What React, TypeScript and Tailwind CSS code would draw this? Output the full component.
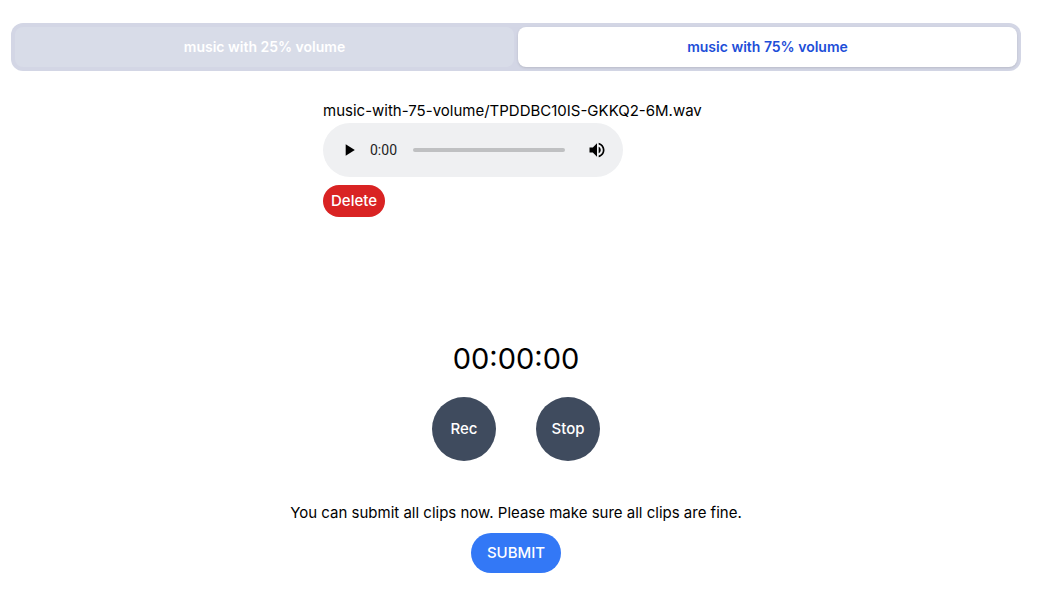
import { useState } from "react";

const tabs = ["music with 25% volume", "music with 75% volume"];

function AudioPlayer() {
  const [position, setPosition] = useState(0);
  return (
    <div className="flex h-[54px] w-[300px] items-center rounded-full bg-[#eff0f2] px-4">
      <button type="button" aria-label="Play" className="flex size-5 shrink-0 items-center justify-center">
        <svg viewBox="0 0 24 24" className="size-5" fill="#000">
          <path d="M8 5v14l11-7z" />
        </svg>
      </button>
      <span className="ml-[11px] w-[43px] font-[Roboto,sans-serif] text-sm text-[#1f1f1f]">0:00</span>
      <input
        type="range"
        aria-label="Position"
        min={0}
        max={100}
        value={position}
        onChange={(e) => setPosition(Number(e.target.value))}
        className="h-1 w-0 min-w-0 flex-1 appearance-none rounded-full bg-[#bfc0c2] [&::-webkit-slider-thumb]:size-1 [&::-webkit-slider-thumb]:appearance-none [&::-webkit-slider-thumb]:opacity-0"
      />
      <button type="button" aria-label="Mute" className="ml-[22px] flex size-5 shrink-0 items-center justify-center">
        <svg viewBox="0 0 24 24" className="size-5" fill="#000">
          <path d="M3 9v6h4l5 5V4L7 9H3zm13.5 3c0-1.77-1.02-3.29-2.5-4.03v8.05c1.48-.73 2.5-2.25 2.5-4.02zM14 3.23v2.06c2.89.86 5 3.54 5 6.71s-2.11 5.85-5 6.71v2.06c4.01-.91 7-4.49 7-8.77s-2.99-7.86-7-8.77z" />
        </svg>
      </button>
    </div>
  );
}

export default function App() {
  const [active, setActive] = useState(1);
  return (
    <main className="flex flex-col items-center bg-white pt-[23px] pr-8 pb-9 pl-[11px] font-[Inter,sans-serif] text-[15px] leading-6 text-black">
      <div role="tablist" className="flex w-full gap-1 rounded-xl bg-[#d3d6e5] p-1">
        {tabs.map((label, i) => (
          <button
            key={label}
            type="button"
            role="tab"
            aria-selected={active === i}
            onClick={() => setActive(i)}
            className={
              active === i
                ? "h-10 flex-1 rounded-lg bg-white text-sm font-semibold text-[#1d4ed8] shadow-sm"
                : "h-10 flex-1 rounded-lg bg-[#d8dce8] text-sm font-semibold text-white"
            }
          >
            {label}
          </button>
        ))}
      </div>

      <section role="tabpanel" className="mt-7 flex min-w-[386px] flex-col items-start">
        <p>music-with-75-volume/TPDDBC10IS-GKKQ2-6M.wav</p>
        <AudioPlayer />
        <button type="button" className="mt-2 h-8 rounded-full bg-[#d92323] px-2 font-medium text-white">
          Delete
        </button>
      </section>

      <p className="mt-[124px] text-[29px] leading-9">00:00:00</p>
      <div className="mt-5 flex gap-10">
        <button type="button" className="size-16 rounded-full bg-[#3f4b5e] font-medium text-white">
          Rec
        </button>
        <button type="button" className="size-16 rounded-full bg-[#3f4b5e] font-medium text-white">
          Stop
        </button>
      </div>

      <p className="mt-10">You can submit all clips now. Please make sure all clips are fine.</p>
      <button type="button" className="mt-2 h-10 rounded-full bg-[#3378f6] px-4 font-medium text-white">
        SUBMIT
      </button>
    </main>
  );
}
